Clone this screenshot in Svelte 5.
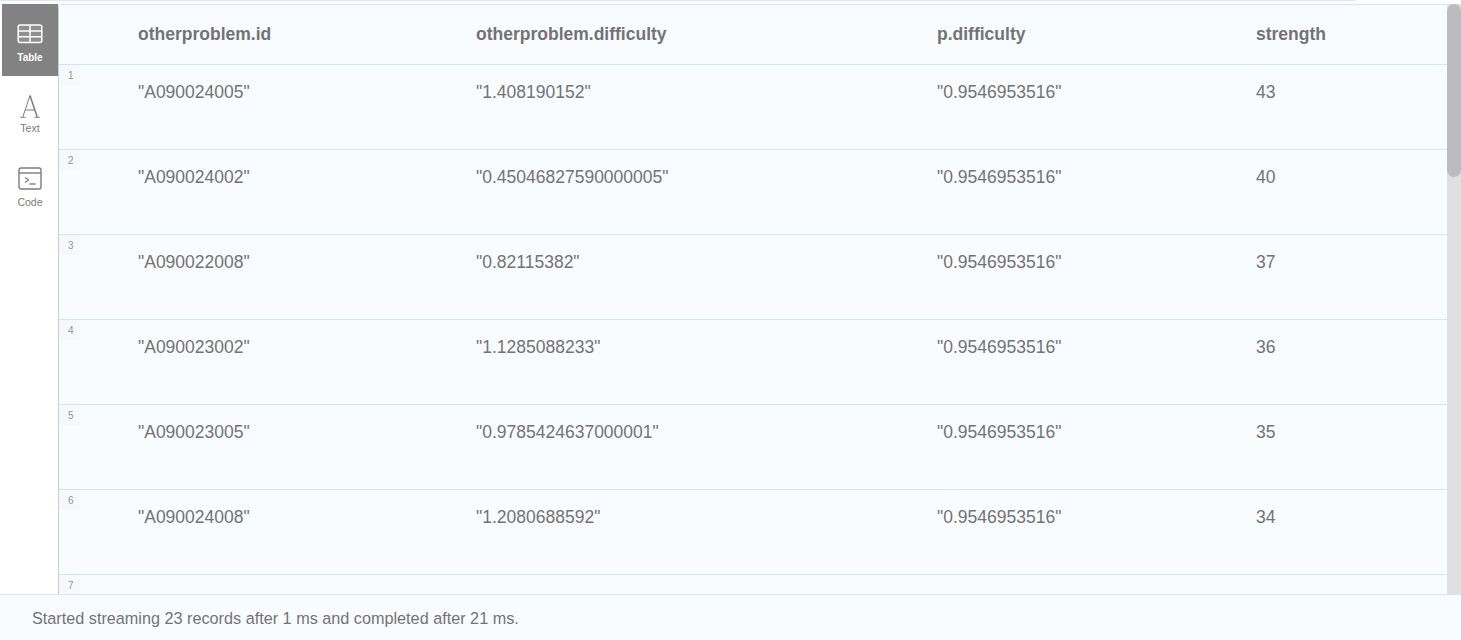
<script>
  const columns = [
    { name: 'otherproblem.id', key: 'id' },
    { name: 'otherproblem.difficulty', key: 'difficulty' },
    { name: 'p.difficulty', key: 'base' },
    { name: 'strength', key: 'strength' }
  ];

  const rows = [
    { id: '"A090024005"', difficulty: '"1.408190152"', base: '"0.9546953516"', strength: '43' },
    { id: '"A090024002"', difficulty: '"0.45046827590000005"', base: '"0.9546953516"', strength: '40' },
    { id: '"A090022008"', difficulty: '"0.82115382"', base: '"0.9546953516"', strength: '37' },
    { id: '"A090023002"', difficulty: '"1.1285088233"', base: '"0.9546953516"', strength: '36' },
    { id: '"A090023005"', difficulty: '"0.9785424637000001"', base: '"0.9546953516"', strength: '35' },
    { id: '"A090024008"', difficulty: '"1.2080688592"', base: '"0.9546953516"', strength: '34' },
    { id: '', difficulty: '', base: '', strength: '' }
  ];
</script>

<div class="frame">
  <div class="top-strip"></div>
  <div class="main">
    <nav class="sidebar">
      <div class="tab active">
        <svg width="26" height="20" viewBox="0 0 26 20" fill="none" stroke="#fff" stroke-width="1.5">
          <rect x="1.2" y="1" width="23.6" height="17.6" rx="2" fill="#8f8f8f" />
          <path d="M13 1v17.6M1.2 7h23.6M1.2 12.8h23.6" />
        </svg>
        <span>Table</span>
      </div>
      <div class="tab text-tab">
        <svg width="22" height="23" viewBox="0 0 22 23" fill="none" stroke="#7c7c7c">
          <path d="M11 .5 3.8 22" stroke-width="1" />
          <path d="M11 .5 18.2 22" stroke-width="1.5" />
          <path d="M6 15h10M1.2 22.3h5.3M15.5 22.3h5.3" stroke-width="1" />
        </svg>
        <span>Text</span>
      </div>
      <div class="tab code-tab">
        <svg width="24" height="23" viewBox="0 0 24 23" fill="none" stroke="#7c7c7c">
          <rect x="1" y="1" width="22" height="21" rx="2" stroke-width="1.4" />
          <path d="M1 6h22" stroke-width="1.4" />
          <path d="M7 10.5l3.5 2.5L7 15.5" stroke-width="1.2" />
          <path d="M11.5 17h6" stroke-width="1.4" />
        </svg>
        <span>Code</span>
      </div>
    </nav>

    <div class="table-wrap">
      <div class="table">
        <div class="row head">
          {#each columns as col}
            <div class="cell">{col.name}</div>
          {/each}
        </div>
        {#each rows as row, i}
          <div class="row">
            <span class="index">{i + 1}</span>
            {#each columns as col}
              <div class="cell">{row[col.key]}</div>
            {/each}
          </div>
        {/each}
      </div>
      <div class="scrollbar"><div class="thumb"></div></div>
    </div>
  </div>
  <footer class="status">Started streaming 23 records after 1 ms and completed after 21 ms.</footer>
</div>

<style>
  :global(body) {
    margin: 0;
    background: #fff;
    overflow: hidden;
  }

  .frame {
    width: 1461px;
    height: 640px;
    display: flex;
    flex-direction: column;
    font-family: "Liberation Sans", Arial, sans-serif;
    color: #737374;
    overflow: hidden;
  }

  .top-strip {
    height: 4px;
    flex: none;
    background: linear-gradient(#d9e9f7 0 1.5px, #fff 1.5px);
    background-size: 1356px 100%;
    background-repeat: no-repeat;
  }

  .main {
    flex: 1;
    min-height: 0;
    display: flex;
    padding-left: 2px;
  }

  .sidebar {
    width: 56px;
    flex: none;
    display: flex;
    flex-direction: column;
  }

  .tab {
    display: flex;
    flex-direction: column;
    align-items: center;
    font-size: 10.5px;
    line-height: 12px;
    color: #7c7c7c;
  }

  .tab.active {
    height: 72px;
    background: #828282;
    color: #fff;
    font-size: 10px;
    font-weight: 700;
    padding-top: 20px;
    box-sizing: border-box;
    gap: 8px;
  }

  .text-tab {
    padding-top: 19px;
    gap: 4px;
  }

  .code-tab {
    padding-top: 33px;
    gap: 6px;
  }

  .table-wrap {
    flex: 1;
    min-width: 0;
    display: flex;
    border-left: 1px solid #c9ccd2;
    border-top-left-radius: 4px;
    overflow: hidden;
  }

  .table {
    flex: 1;
    min-width: 0;
    background: #f9fcff;
    border-top: 1px solid #dfe3e8;
    overflow: hidden;
  }

  .row {
    position: relative;
    height: 85px;
    box-sizing: border-box;
    display: grid;
    grid-template-columns: 338px 461px 319px 1fr;
    padding: 16px 0 0 79px;
    border-top: 1px solid #d6e4f2;
    font-size: 17.5px;
    line-height: 22px;
  }

  .row.head {
    height: 59px;
    border-top: 0;
    padding-top: 18px;
    font-weight: 700;
  }

  .index {
    position: absolute;
    left: 0;
    top: 0;
    width: 21px;
    height: 20px;
    box-sizing: border-box;
    padding: 5px 0 0 9px;
    background: #f7f8fa;
    font-size: 10px;
    line-height: 11px;
    color: #969696;
  }

  .scrollbar {
    width: 14px;
    flex: none;
    background: #e0e0e3;
  }

  .thumb {
    height: 173px;
    background: #bcbcc0;
    border-radius: 7px;
  }

  .status {
    height: 46px;
    flex: none;
    box-sizing: border-box;
    background: #f9fcff;
    border-top: 1px solid #dbe5f0;
    padding: 13px 0 0 32px;
    font-size: 16.23px;
    line-height: 20px;
  }
</style>
